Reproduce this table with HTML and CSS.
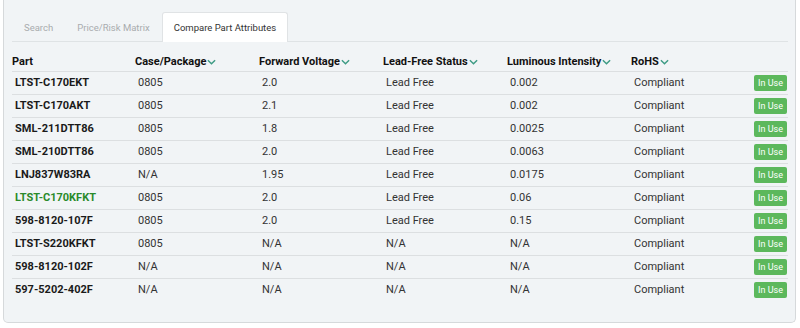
FILE: index.html
```html
<!DOCTYPE html>
<html lang="en">
<head>
    <meta charset="UTF-8">
    <title>Compare Part Attributes</title>
    <link rel="stylesheet" href="styles.css">
</head>
<body>
    <div class="panel">
        <ul class="tabs">
            <li class="tab">Search</li>
            <li class="tab">Price/Risk Matrix</li>
            <li class="tab active">Compare Part Attributes</li>
        </ul>

        <table class="parts">
            <thead>
                <tr>
                    <th class="col-part">Part</th>
                    <th class="col-attr">Case/Package<svg class="chev" viewBox="0 0 10 6"><polyline points="1,1 5,5 9,1"/></svg></th>
                    <th class="col-attr">Forward Voltage<svg class="chev" viewBox="0 0 10 6"><polyline points="1,1 5,5 9,1"/></svg></th>
                    <th class="col-attr">Lead-Free Status<svg class="chev" viewBox="0 0 10 6"><polyline points="1,1 5,5 9,1"/></svg></th>
                    <th class="col-attr">Luminous Intensity<svg class="chev" viewBox="0 0 10 6"><polyline points="1,1 5,5 9,1"/></svg></th>
                    <th>RoHS<svg class="chev" viewBox="0 0 10 6"><polyline points="1,1 5,5 9,1"/></svg></th>
                    <th class="col-status"></th>
                </tr>
            </thead>
            <tbody>
                <tr><td class="part">LTST-C170EKT</td><td>0805</td><td>2.0</td><td>Lead Free</td><td>0.002</td><td>Compliant</td><td class="status"><span class="badge">In Use</span></td></tr>
                <tr><td class="part">LTST-C170AKT</td><td>0805</td><td>2.1</td><td>Lead Free</td><td>0.002</td><td>Compliant</td><td class="status"><span class="badge">In Use</span></td></tr>
                <tr><td class="part">SML-211DTT86</td><td>0805</td><td>1.8</td><td>Lead Free</td><td>0.0025</td><td>Compliant</td><td class="status"><span class="badge">In Use</span></td></tr>
                <tr><td class="part">SML-210DTT86</td><td>0805</td><td>2.0</td><td>Lead Free</td><td>0.0063</td><td>Compliant</td><td class="status"><span class="badge">In Use</span></td></tr>
                <tr><td class="part">LNJ837W83RA</td><td>N/A</td><td>1.95</td><td>Lead Free</td><td>0.0175</td><td>Compliant</td><td class="status"><span class="badge">In Use</span></td></tr>
                <tr><td class="part current">LTST-C170KFKT</td><td>0805</td><td>2.0</td><td>Lead Free</td><td>0.06</td><td>Compliant</td><td class="status"><span class="badge">In Use</span></td></tr>
                <tr><td class="part">598-8120-107F</td><td>0805</td><td>2.0</td><td>Lead Free</td><td>0.15</td><td>Compliant</td><td class="status"><span class="badge">In Use</span></td></tr>
                <tr><td class="part">LTST-S220KFKT</td><td>0805</td><td>N/A</td><td>N/A</td><td>N/A</td><td>Compliant</td><td class="status"><span class="badge">In Use</span></td></tr>
                <tr><td class="part">598-8120-102F</td><td>N/A</td><td>N/A</td><td>N/A</td><td>N/A</td><td>Compliant</td><td class="status"><span class="badge">In Use</span></td></tr>
                <tr><td class="part">597-5202-402F</td><td>N/A</td><td>N/A</td><td>N/A</td><td>N/A</td><td>Compliant</td><td class="status"><span class="badge">In Use</span></td></tr>
            </tbody>
        </table>
    </div>
</body>
</html>
```

FILE: styles.css
```css
* {
    margin: 0;
    padding: 0;
    box-sizing: border-box;
}

body {
    font-family: Roboto, 'Liberation Sans', Arial, sans-serif;
    background: #fff;
    color: #222;
    font-size: 11px;
}

.panel {
    margin-left: 3px;
    width: 793px;
    height: 323px;
    background: #f1f4f6;
    border: 1px solid #d6d9db;
    border-top: none;
    border-radius: 0 0 5px 5px;
    padding: 12px 7px 0 8px;
}

.tabs {
    list-style: none;
    display: flex;
    height: 30px;
    border-bottom: 1px solid #dfe3e5;
    font-size: 9.5px;
}

.tab {
    padding: 0 11px 0 11px;
    line-height: 30px;
    color: #a9acae;
    border: 1px solid transparent;
    border-bottom: none;
    border-radius: 3px 3px 0 0;
}

.tab.active {
    color: #333;
    background: #fff;
    border-color: #e0e3e5;
    margin-bottom: -1px;
}

.parts {
    width: 776px;
    margin-top: 11px;
    border-collapse: collapse;
    table-layout: fixed;
}

.parts th {
    text-align: left;
    font-weight: bold;
    color: #111;
    height: 18px;
    padding: 0;
    border-bottom: 1px solid #dcdfe1;
    white-space: nowrap;
}

.col-part { width: 123px; }
.col-attr { width: 124px; }
.col-status { width: 40px; }

.chev {
    width: 9px;
    height: 6px;
    margin-left: 1px;
    vertical-align: 0;
    fill: none;
    stroke: #3d9b84;
    stroke-width: 1.6;
}

.parts td {
    height: 23px;
    padding: 0 0 0 3px;
    color: #333;
    border-bottom: 1px solid #dcdfe1;
    white-space: nowrap;
}

.parts tbody tr:last-child td {
    border-bottom: none;
}

.parts td.part {
    font-weight: bold;
    color: #1a1a1a;
}

.parts td.current {
    color: #2a8a2a;
}

.parts td.status {
    text-align: right;
    padding: 0 1px 0 0;
}

.badge {
    display: inline-block;
    background: #5cb85c;
    color: #fff;
    font-size: 9px;
    line-height: 16px;
    padding: 0 4px;
    border-radius: 2px;
    vertical-align: middle;
}
```
